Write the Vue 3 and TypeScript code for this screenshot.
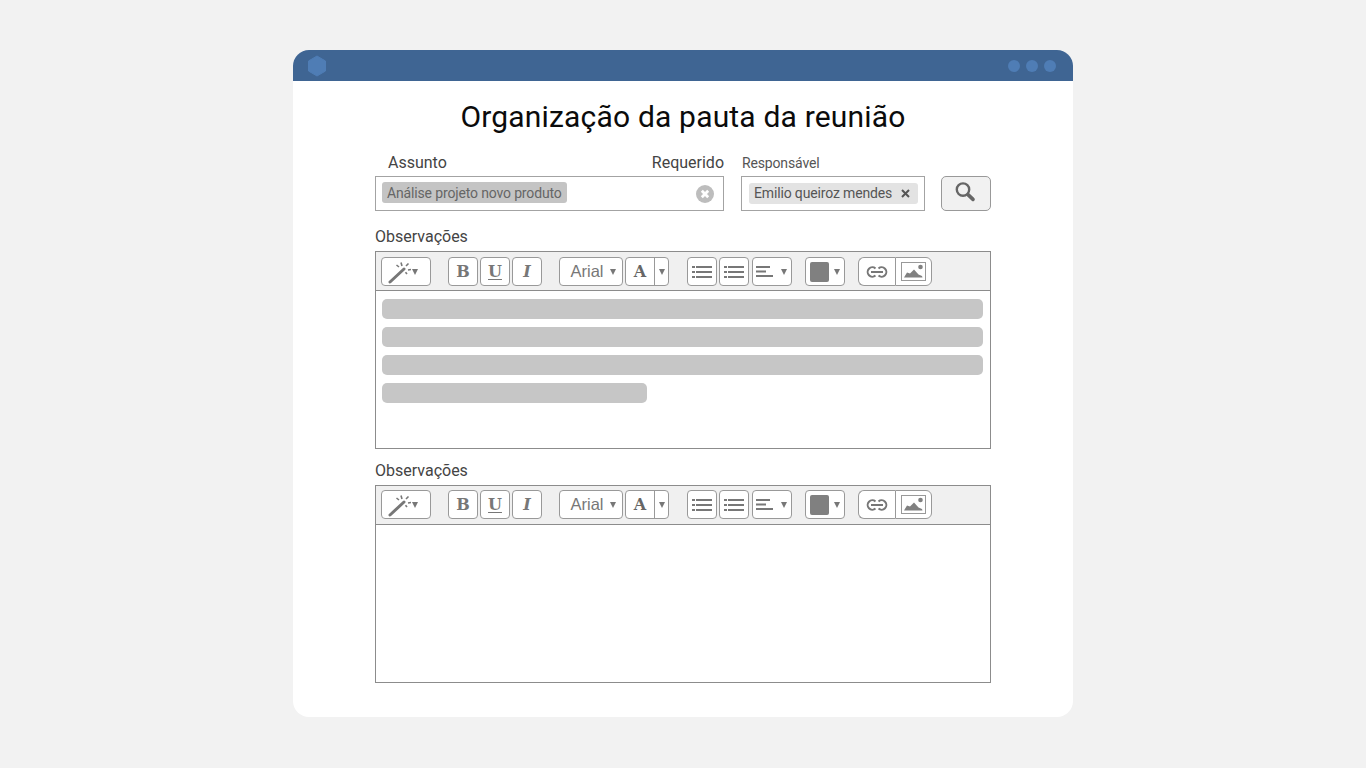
<script setup lang="ts">
interface Editor {
  id: number
  bars: number[]
  compact: boolean
}
const editors: Editor[] = [
  { id: 1, bars: [601, 601, 601, 265], compact: false },
  { id: 2, bars: [], compact: true },
]
</script>

<template>
  <main class="page">
    <section class="card">
      <header class="titlebar">
        <svg class="logo" width="20" height="22" viewBox="0 0 20 22"><path d="M10 1l8.500 5v10L10 21l-8.500-5V6z" fill="#4f7db5" stroke="#4f7db5" stroke-linejoin="round" /></svg>
        <div class="dots"><i></i><i></i><i></i></div>
      </header>
      <div class="content">
        <h1>Organização da pauta da reunião</h1>
        <div class="fields">
          <div class="field subject">
            <div class="labels"><span>Assunto</span><span>Requerido</span></div>
            <div class="input">
              <span class="tag dark">Análise projeto novo produto</span>
              <svg class="clear" width="18" height="18" viewBox="0 0 18 18"><circle cx="9" cy="9" r="9" fill="#bdbdbd" /><path d="M5.800 5.800l6.400 6.400M12.200 5.800l-6.400 6.400" stroke="#fff" stroke-width="2.800" /></svg>
            </div>
          </div>
          <div class="field owner">
            <div class="labels small"><span>Responsável</span></div>
            <div class="input">
              <span class="tag light">Emilio queiroz mendes<svg width="9" height="9" viewBox="0 0 9 9"><path d="M1 1l7 7M8 1L1 8" stroke="#555" stroke-width="2" /></svg></span>
            </div>
          </div>
          <button class="search" aria-label="Pesquisar">
            <svg width="22" height="22" viewBox="0 0 22 22" fill="none"><circle cx="9" cy="8.600" r="6.200" stroke="#666" stroke-width="2.400" /><path d="M14 13.600l5 4.800" stroke="#666" stroke-width="3.600" stroke-linecap="round" /></svg>
          </button>
        </div>

        <div v-for="e in editors" :key="e.id" class="block">
          <label>Observações</label>
          <div class="editor">
            <div class="toolbar" :class="{ compact: e.compact }">
              <button class="btn wand">
                <svg width="24" height="24" viewBox="0 0 24 24" fill="none"><path d="M3 22L17 9" stroke="#777" stroke-width="3" stroke-linecap="round" /><path d="M14 2.500l1 3.500M21.500 3.500l-2.500 2.500M9.500 5l2.500 2M24 9.500l-3 .5M20 14l-1.500-1.800" stroke="#777" stroke-width="1.600" /></svg>
                <b class="caret"></b>
              </button>
              <div class="group">
                <button class="btn icon serif">B</button>
                <button class="btn icon serif under">U</button>
                <button class="btn icon serif ital">I</button>
              </div>
              <button class="btn font">Arial<b class="caret"></b></button>
              <button class="btn color-a"><span class="a serif">A</span><span class="split"><b class="caret"></b></span></button>
              <div class="group lists">
                <button class="btn icon">
                  <svg width="20" height="12" viewBox="0 0 20 12"><path d="M0 1h3M4 1h16M0 6h3M4 6h16M0 11h3M4 11h16" stroke="#777" stroke-width="2" /></svg>
                </button>
                <button class="btn icon">
                  <svg width="20" height="12" viewBox="0 0 20 12"><path d="M0 1h3M4 1h16M0 6h3M4 6h16M0 11h3M4 11h16" stroke="#777" stroke-width="2" /></svg>
                </button>
                <button class="btn align">
                  <svg width="17" height="11" viewBox="0 0 17 11"><path d="M0 1h14M0 5.500h10M0 10h17" stroke="#777" stroke-width="1.800" /></svg>
                  <b class="caret"></b>
                </button>
              </div>
              <button class="btn swatch"><span></span><b class="caret"></b></button>
              <div class="joined">
                <button class="btn link">
                  <svg width="24" height="12" viewBox="0 0 24 12" fill="none"><path d="M10.500 2.500a4.700 4.700 0 1 0 0 7M13.500 2.500a4.700 4.700 0 1 1 0 7M6 6h12" stroke="#777" stroke-width="2" /></svg>
                </button>
                <button class="btn image">
                  <svg width="25" height="19" viewBox="0 0 25 19"><rect x=".5" y=".5" width="24" height="18" fill="#fff" stroke="#999" /><path d="M3 15.500l3-5 3 1 4-4 4.500 5 3.500 1.500 .5 1.500z" fill="#808080" /><circle cx="19.500" cy="5" r="2.300" fill="#808080" /></svg>
                </button>
              </div>
            </div>
            <div class="body">
              <div v-for="(w, i) in e.bars" :key="i" class="bar" :style="{ width: w + 'px' }"></div>
            </div>
          </div>
        </div>
      </div>
    </section>
  </main>
</template>

<style>
body {
  margin: 0;
  background: #f2f2f2;
}
</style>

<style scoped>
.page {
  display: flex;
  justify-content: center;
  padding: 50px 0 51px 0;
  font-family: Roboto, "Liberation Sans", sans-serif;
}
.card {
  width: 780px;
  height: 667px;
  background: #fff;
  border-radius: 16px;
  overflow: hidden;
  display: flex;
  flex-direction: column;
}
.titlebar {
  height: 31px;
  background: #3f6593;
  display: flex;
  align-items: center;
  justify-content: space-between;
  padding: 0 17px 0 14px;
  flex: none;
}
.logo { display: block; margin-top: 1px; }
.dots { display: flex; gap: 6px; }
.dots i {
  width: 12px;
  height: 12px;
  border-radius: 50%;
  background: #4f7db5;
}
.content {
  padding: 0 82px;
}
h1 {
  margin: 0;
  height: 68px;
  font-size: 30px;
  font-weight: 400;
  line-height: 71px;
  letter-spacing: 0.18px;
  text-align: center;
  color: #0b0b0b;
}
.fields {
  display: flex;
  align-items: flex-end;
  height: 62px;
}
.field { display: flex; flex-direction: column; }
.subject { width: 349px; }
.owner { width: 184px; margin-left: 17px; }
.labels {
  display: flex;
  justify-content: space-between;
  height: 27px;
  padding-left: 13px;
  font-size: 16px;
  line-height: 27px;
  color: #444;
}
.labels.small {
  padding-left: 1px;
  font-size: 14px;
  letter-spacing: -0.15px;
  line-height: 28px;
  color: #555;
}
.input {
  box-sizing: border-box;
  height: 35px;
  border: 1px solid #a3a3a3;
  display: flex;
  align-items: center;
  justify-content: space-between;
  padding: 0 9px 0 6px;
  background: #fff;
}
.tag {
  display: inline-flex;
  align-items: center;
  height: 21px;
  border-radius: 3px;
  font-size: 14px;
  letter-spacing: -0.15px;
  color: #666;
}
.tag.dark {
  background: #c4c4c4;
  padding: 0 5px;
  margin-top: -2px;
}
.tag.light {
  background: #e3e3e3;
  color: #555;
  padding: 0 8px 0 5px;
  margin-left: 1px;
  gap: 9px;
  white-space: nowrap;
  margin-top: -1px;
}
.clear { display: block; }
.search {
  box-sizing: border-box;
  width: 50px;
  height: 35px;
  margin-left: 16px;
  padding: 0 2px 3px 0;
  border: 1px solid #999;
  border-radius: 5px;
  background: #f1f1f1;
  display: flex;
  align-items: center;
  justify-content: center;
}
.block { display: flex; flex-direction: column; }
label {
  height: 40px;
  display: flex;
  align-items: flex-end;
  padding-bottom: 5px;
  box-sizing: border-box;
  font-size: 16px;
  line-height: 19px;
  color: #444;
}
.block + .block label { height: 36px; }
.editor {
  box-sizing: border-box;
  height: 198px;
  border: 1px solid #8c8c8c;
  display: flex;
  flex-direction: column;
}
.toolbar {
  box-sizing: border-box;
  height: 39px;
  flex: none;
  background: #f0f0f0;
  border-bottom: 1px solid #8c8c8c;
  display: flex;
  align-items: flex-start;
  padding: 5px 0 0 5px;
}
.toolbar.compact { padding-top: 4px; }
.btn {
  box-sizing: border-box;
  height: 29px;
  padding: 0;
  border: 1px solid #999;
  border-radius: 4px;
  background: #fff;
  display: flex;
  align-items: center;
  justify-content: center;
  color: #777;
  font-family: "Liberation Sans", Arial, sans-serif;
}
.caret {
  display: block;
  width: 0;
  height: 0;
  border-left: 3.500px solid transparent;
  border-right: 3.500px solid transparent;
  border-top: 6px solid #777;
}
.wand { width: 50px; gap: 1px; padding-left: 5px; justify-content: flex-start; }
.group { display: flex; gap: 2px; margin-left: 17px; }
.icon { width: 30px; }
.serif {
  font-family: "DejaVu Serif", "Liberation Serif", serif;
  font-size: 16px;
  font-weight: 700;
  color: #777;
}
.under { text-decoration: underline; text-underline-offset: 2px; }
.ital { font-style: italic; }
.font {
  width: 64px;
  margin-left: 17px;
  font-size: 16.5px;
  gap: 6px;
  padding-left: 4px;
}
.color-a { width: 44px; margin-left: 2px; justify-content: flex-start; }
.a { width: 28px; text-align: center; color: #666; }
.split {
  height: 100%;
  flex: 1;
  border-left: 1px solid #999;
  display: flex;
  align-items: center;
  justify-content: center;
}
.lists { margin-left: 18px; }
.align { width: 40px; gap: 8px; margin-left: 1px; padding-right: 1px; }
.swatch { width: 40px; margin-left: 13px; gap: 5px; padding-right: 1px; }
.swatch span {
  width: 19px;
  height: 20px;
  background: #808080;
  border-radius: 2px;
}
.joined { display: flex; margin-left: 13px; }
.link {
  width: 37px;
  border-radius: 6px 0 0 6px;
  border-right: 0;
}
.image {
  width: 37px;
  border-radius: 0 6px 6px 0;
}
.body {
  flex: 1;
  padding: 8px 0 0 6px;
  display: flex;
  flex-direction: column;
  gap: 8px;
  background: #fff;
}
.bar {
  height: 20px;
  border-radius: 5px;
  background: #c6c6c6;
}
</style>
